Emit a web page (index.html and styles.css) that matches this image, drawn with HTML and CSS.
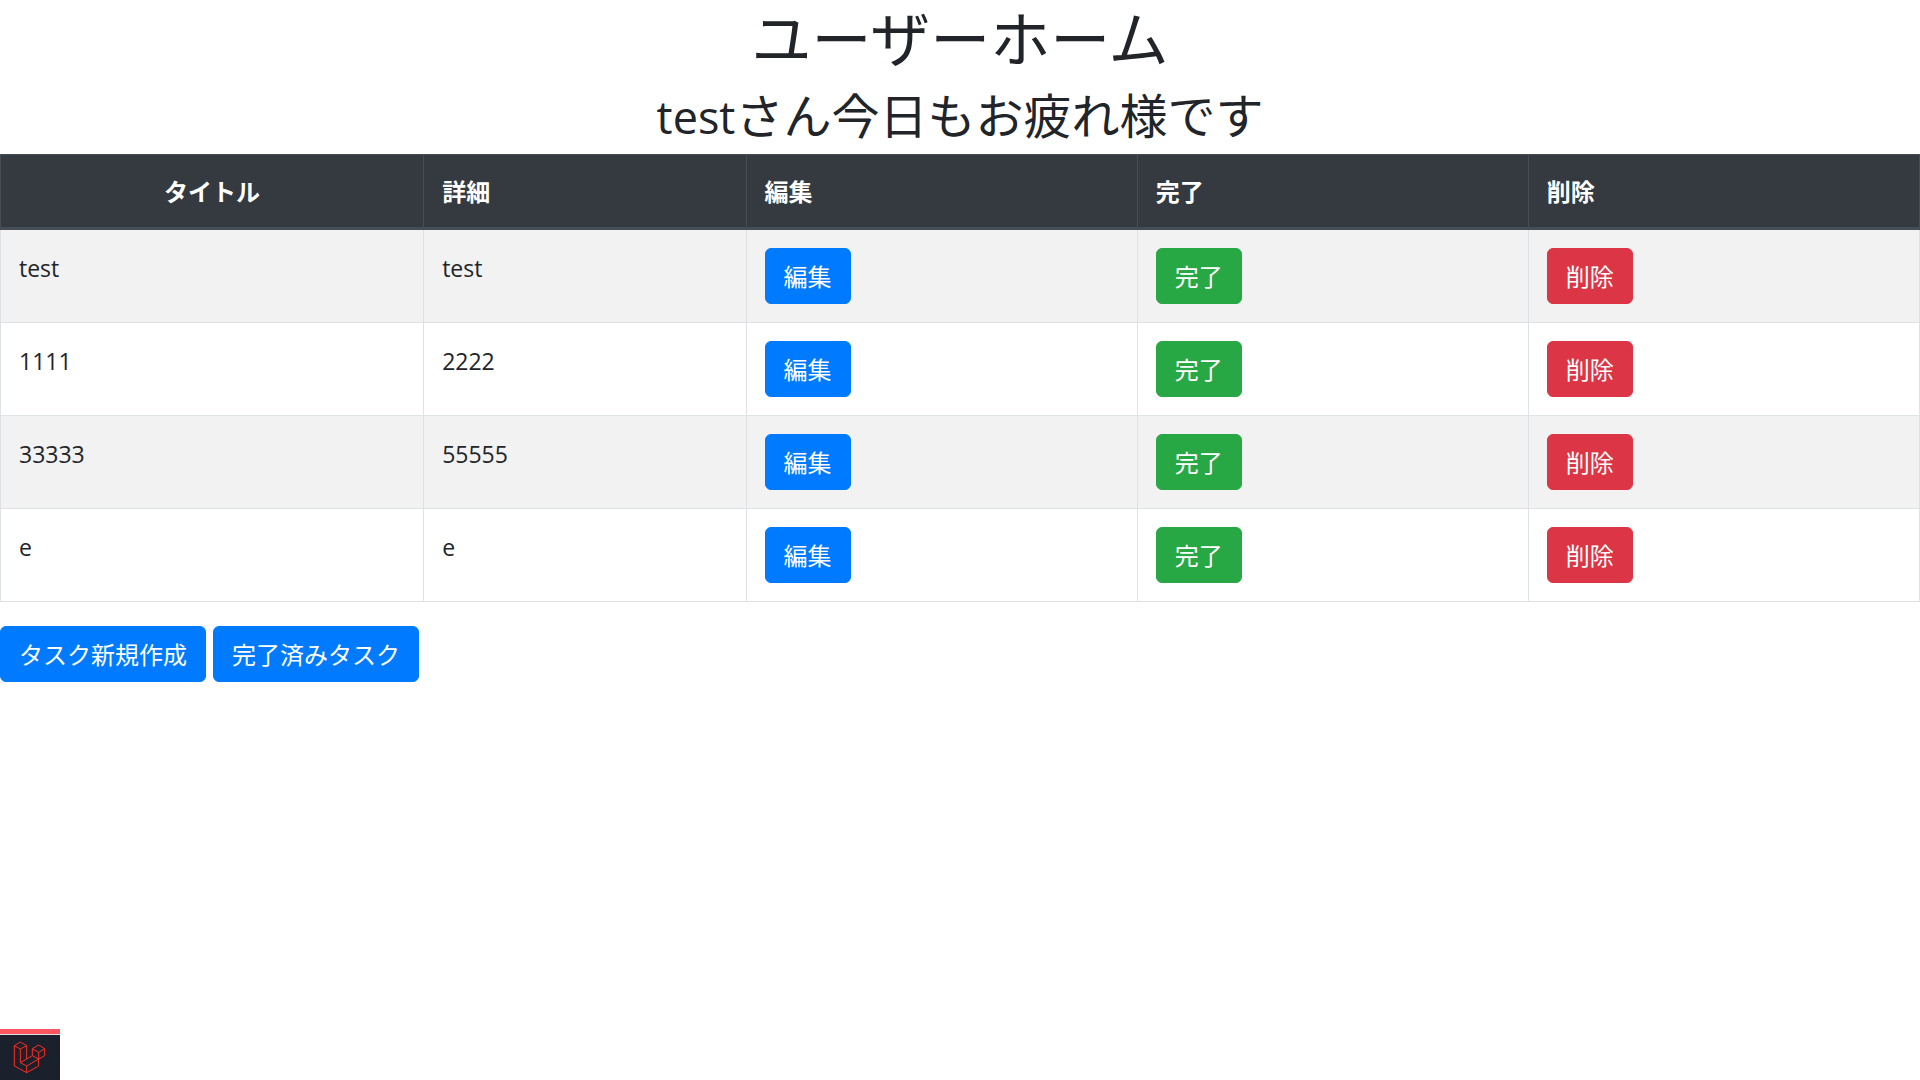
FILE: index.html
```html
<!DOCTYPE html>
<html lang="ja">
<head>
<meta charset="utf-8">
<meta name="viewport" content="width=device-width, initial-scale=1">
<title>ユーザーホーム</title>
<link rel="stylesheet" href="styles.css">
</head>
<body>
<main>
  <h1 class="title">ユーザーホーム</h1>
  <h2 class="greeting"><span class="user-name">test</span>さん今日もお疲れ様です</h2>
  <table class="tasks">
    <colgroup>
      <col class="col-title"><col class="col-detail"><col class="col-action"><col class="col-action"><col class="col-action">
    </colgroup>
    <thead>
      <tr><th class="centered" scope="col">タイトル</th><th scope="col">詳細</th><th scope="col">編集</th><th scope="col">完了</th><th scope="col">削除</th></tr>
    </thead>
    <tbody>
      <tr><td>test</td><td>test</td><td><button type="button" class="btn primary">編集</button></td><td><button type="button" class="btn success">完了</button></td><td><button type="button" class="btn danger">削除</button></td></tr>
      <tr><td>1111</td><td>2222</td><td><button type="button" class="btn primary">編集</button></td><td><button type="button" class="btn success">完了</button></td><td><button type="button" class="btn danger">削除</button></td></tr>
      <tr><td>33333</td><td>55555</td><td><button type="button" class="btn primary">編集</button></td><td><button type="button" class="btn success">完了</button></td><td><button type="button" class="btn danger">削除</button></td></tr>
      <tr><td>e</td><td>e</td><td><button type="button" class="btn primary">編集</button></td><td><button type="button" class="btn success">完了</button></td><td><button type="button" class="btn danger">削除</button></td></tr>
    </tbody>
  </table>
  <div class="actions">
    <button type="button" class="btn primary">タスク新規作成</button>
    <button type="button" class="btn primary">完了済みタスク</button>
  </div>
</main>
<button type="button" class="debugbar" aria-label="Debugbar">
  <svg class="logo" viewBox="0 0 132 120" aria-hidden="true">
    <path d="M19 29 37 18 56 29 37 39ZM19 29V90L56 110 92 90V69M37 39V80L56 90 92 69M56 29V69M37 80 73 59M56 90V110M73 38 92 27 110 38 92 49ZM73 38V59L92 69 110 59V38M92 49V69"/>
  </svg>
</button>
</body>
</html>
```

FILE: styles.css
```css
*,
*::before,
*::after {
  box-sizing: border-box;
}

body {
  margin: 0;
  background: #fff;
  color: #212529;
  font: 400 24px/36px "Noto Sans CJK JP", sans-serif;
}

.title,
.greeting {
  margin: 0 0 12px;
  font-weight: 400;
  text-align: center;
}

.title {
  font-size: 60px;
  line-height: 72px;
}

.greeting {
  font-size: 48px;
  line-height: 58px;
}

.user-name {
  font-family: "Open Sans", sans-serif;
  font-size: 45px;
  line-height: 1;
}

.tasks {
  width: 100%;
  margin-bottom: 24px;
  border: 1px solid #dee2e6;
  border-collapse: collapse;
  table-layout: fixed;
}

.col-title {
  width: 22.05%;
}

.col-detail {
  width: 16.8%;
}

.col-action {
  width: 20.38%;
}

.tasks th,
.tasks td {
  padding: 18px;
  border: 1px solid #dee2e6;
  text-align: left;
  vertical-align: top;
}

.tasks th {
  border-color: #454d55;
  border-bottom-width: 3px;
  background: #343a40;
  color: #fff;
  font-weight: 700;
}

.tasks th.centered {
  text-align: center;
}

.tasks td {
  font-family: "Open Sans", sans-serif;
  font-size: 23px;
  line-height: 40px;
}

.tasks tbody tr:nth-child(odd) {
  background: #f2f2f2;
}

.btn {
  display: block;
  padding: 9px 18px;
  border: 1px solid transparent;
  border-radius: 6px;
  color: #fff;
  font: 400 24px/36px "Noto Sans CJK JP", sans-serif;
  cursor: pointer;
}

.primary {
  background: #007bff;
  border-color: #007bff;
}

.success {
  background: #28a745;
  border-color: #28a745;
}

.danger {
  background: #dc3545;
  border-color: #dc3545;
}

.actions {
  display: flex;
  gap: 7px;
}

.debugbar {
  position: fixed;
  bottom: 0;
  left: 0;
  display: flex;
  align-items: center;
  justify-content: center;
  width: 60px;
  height: 51px;
  padding: 0 0 2px;
  border: 0;
  border-top: 5px solid #ff5661;
  background: #1b212c;
  box-shadow: inset 0 1px #ddd;
}

.logo {
  width: 44px;
  height: 40px;
  fill: none;
  stroke: #ff2d20;
  stroke-width: 3;
  stroke-linejoin: round;
}
```
